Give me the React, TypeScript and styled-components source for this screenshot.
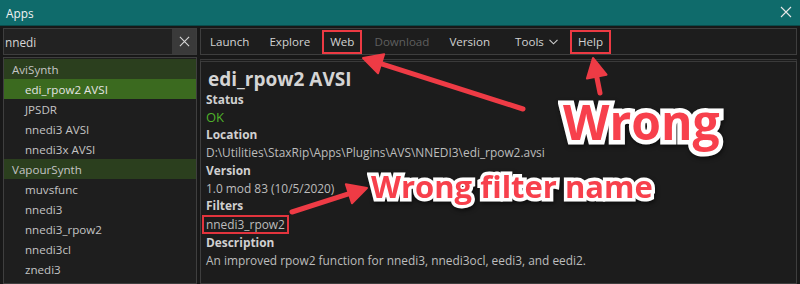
import React from "react";
import styled, { createGlobalStyle } from "styled-components";

const Global = createGlobalStyle`
  html, body { margin: 0; padding: 0; background: #181818; }
  body { font-family: "Open Sans", "Noto Sans", sans-serif; }
  * { box-sizing: border-box; }
`;

const Window = styled.div`
  position: relative;
  width: 800px;
  height: 284px;
  overflow: hidden;
  background: #181818;
  display: flex;
  flex-direction: column;
`;

const TitleBar = styled.div`
  height: 26px;
  flex: none;
  background: #0f6b6b;
  border-bottom: 1px solid #0a4c4c;
  display: flex;
  align-items: center;
  justify-content: space-between;
  padding: 0 8px 0 6px;
  color: #f2f2f2;
  font-size: 11.8px;
`;

const CloseBtn = styled.span`
  display: flex;
  width: 12px;
  height: 12px;
  margin-top: -2px;
`;

const Body = styled.div`
  flex: 1;
  display: grid;
  grid-template-columns: 194px 1fr;
  column-gap: 3px;
  padding: 2px 3px 0 3px;
  min-height: 0;
`;

const Column = styled.div<{ $gap: number }>`
  display: flex;
  flex-direction: column;
  gap: ${(p) => p.$gap}px;
  min-height: 0;
`;

const SearchBox = styled.div`
  height: 27px;
  flex: none;
  display: flex;
  border: 1px solid #3e3e3e;
  background: #222222;
`;

const SearchText = styled.div`
  flex: 1;
  display: flex;
  align-items: center;
  padding-left: 1px;
  color: #d6d6d6;
  font-size: 11.8px;
`;

const ClearBtn = styled.div`
  width: 24px;
  display: flex;
  align-items: center;
  justify-content: center;
  background: #3a3a3a;
`;

const ListPanel = styled.div`
  flex: 1;
  border: 1px solid #3f3f3f;
  background: #1e1e1e;
  padding-top: 1px;
  overflow: hidden;
`;

const ListRow = styled.div<{ $kind: "group" | "item" | "selected" }>`
  height: 20px;
  display: flex;
  align-items: center;
  padding-left: ${(p) => (p.$kind === "group" ? 8 : 21)}px;
  font-size: 11.6px;
  color: ${(p) => (p.$kind === "selected" ? "#e4e4e4" : "#c4c4c4")};
  background: ${(p) =>
    p.$kind === "group" ? "#2b3f1e" : p.$kind === "selected" ? "#3b6a1f" : "transparent"};
`;

const Toolbar = styled.div`
  height: 27px;
  flex: none;
  display: flex;
  align-items: center;
  gap: 4px;
  padding: 0 1px;
  border: 1px solid #3e3e3e;
  background: #1d1d1d;
`;

const ToolButton = styled.div<{ $disabled?: boolean; $marked?: boolean; $spaced?: boolean }>`
  height: 24px;
  display: flex;
  align-items: center;
  gap: 5px;
  padding: 0 6px;
  margin-left: ${(p) => (p.$spaced ? 5 : 0)}px;
  font-size: 11.6px;
  color: ${(p) => (p.$disabled ? "#5f5f5f" : "#d2d2d2")};
  border: 2px solid ${(p) => (p.$marked ? "#ec3a43" : "transparent")};
`;

const Details = styled.div`
  flex: 1;
  margin-top: 1px;
  border: 1px solid #3e3e3e;
  border-top: 3px double #3a3a3a;
  background: #1c1c1c;
  padding: 5px 5px 0 5px;
  overflow: hidden;
`;

const Title = styled.div`
  font-size: 19px;
  font-weight: 700;
  color: #d4d4d4;
  line-height: 24px;
  padding-left: 2px;
`;

const Label = styled.div`
  font-size: 11.9px;
  font-weight: 700;
  color: #d0d0d0;
  line-height: 17.7px;
`;

const Value = styled.div<{ $tone?: "ok" }>`
  font-size: ${(p) => (p.$tone === "ok" ? 13 : 11.9)}px;
  color: ${(p) => (p.$tone === "ok" ? "#4fb12a" : "#bdbdbd")};
  line-height: 17.7px;
`;

const Marked = styled.span`
  display: inline-block;
  margin-left: -4px;
  padding: 0 2px;
  line-height: 15px;
  border: 2px solid #e2343d;
`;

const Overlay = styled.svg`
  position: absolute;
  left: 0;
  top: 0;
  pointer-events: none;
`;

const Callout = styled.div<{ $size: number; $x: number; $y: number }>`
  position: absolute;
  left: ${(p) => p.$x}px;
  top: ${(p) => p.$y}px;
  font-family: "Open Sans", "Noto Sans", sans-serif;
  font-weight: 700;
  font-size: ${(p) => p.$size}px;
  line-height: 1;
  white-space: nowrap;
  color: #f7404c;
  -webkit-text-stroke: ${(p) => (p.$size > 40 ? 9 : 7)}px #ffffff;
  paint-order: stroke fill;
  filter: drop-shadow(1px 2px 2px rgba(0, 0, 0, 0.55));
`;

type Pt = [number, number];

function Arrow({ tail, tip }: { tail: Pt; tip: Pt }) {
  const dx = tail[0] - tip[0];
  const dy = tail[1] - tip[1];
  const len = Math.hypot(dx, dy);
  const ux = dx / len;
  const uy = dy / len;
  const headLen = 19;
  const half = 10;
  const bx = tip[0] + ux * headLen;
  const by = tip[1] + uy * headLen;
  const w1: Pt = [bx - uy * half, by + ux * half];
  const w2: Pt = [bx + uy * half, by - ux * half];
  return (
    <g>
      <line
        x1={tail[0]}
        y1={tail[1]}
        x2={bx - ux * 2}
        y2={by - uy * 2}
        stroke="#ee3b45"
        strokeWidth={5}
        strokeLinecap="round"
      />
      <polygon
        points={`${tip[0]},${tip[1]} ${w1[0]},${w1[1]} ${w2[0]},${w2[1]}`}
        fill="#ee3b45"
        stroke="#ee3b45"
        strokeWidth={2}
        strokeLinejoin="round"
      />
    </g>
  );
}

const XIcon = ({ size, color, weight }: { size: number; color: string; weight: number }) => (
  <svg width={size} height={size} viewBox="0 0 12 12">
    <path d="M1 1 L11 11 M11 1 L1 11" stroke={color} strokeWidth={weight} fill="none" />
  </svg>
);

const ChevronIcon = () => (
  <svg width="9" height="6" viewBox="0 0 9 6">
    <path d="M0.5 0.8 L4.5 4.8 L8.5 0.8" stroke="#cfcfcf" strokeWidth="1.1" fill="none" />
  </svg>
);

const rows: { label: string; kind: "group" | "item" | "selected" }[] = [
  { label: "AviSynth", kind: "group" },
  { label: "edi_rpow2 AVSI", kind: "selected" },
  { label: "JPSDR", kind: "item" },
  { label: "nnedi3 AVSI", kind: "item" },
  { label: "nnedi3x AVSI", kind: "item" },
  { label: "VapourSynth", kind: "group" },
  { label: "muvsfunc", kind: "item" },
  { label: "nnedi3", kind: "item" },
  { label: "nnedi3_rpow2", kind: "item" },
  { label: "nnedi3cl", kind: "item" },
  { label: "znedi3", kind: "item" },
];

export default function App() {
  return (
    <>
      <Global />
      <Window>
        <TitleBar>
          <span>Apps</span>
          <CloseBtn>
            <XIcon size={12} color="#e8e8e8" weight={1.1} />
          </CloseBtn>
        </TitleBar>
        <Body>
          <Column $gap={2}>
            <SearchBox>
              <SearchText>nnedi</SearchText>
              <ClearBtn>
                <XIcon size={11} color="#d8d8d8" weight={1.2} />
              </ClearBtn>
            </SearchBox>
            <ListPanel>
              {rows.map((r) => (
                <ListRow key={r.label} $kind={r.kind}>
                  {r.label}
                </ListRow>
              ))}
            </ListPanel>
          </Column>
          <Column $gap={3}>
            <Toolbar>
              <ToolButton>Launch</ToolButton>
              <ToolButton>Explore</ToolButton>
              <ToolButton $marked>Web</ToolButton>
              <ToolButton $disabled>Download</ToolButton>
              <ToolButton>Version</ToolButton>
              <ToolButton $spaced>
                Tools <ChevronIcon />
              </ToolButton>
              <ToolButton $marked>Help</ToolButton>
            </Toolbar>
            <Details>
              <Title>edi_rpow2 AVSI</Title>
              <Label>Status</Label>
              <Value $tone="ok">OK</Value>
              <Label>Location</Label>
              <Value>D:\Utilities\StaxRip\Apps\Plugins\AVS\NNEDI3\edi_rpow2.avsi</Value>
              <Label>Version</Label>
              <Value>1.0 mod 83 (10/5/2020)</Value>
              <Label>Filters</Label>
              <Value>
                <Marked>nnedi3_rpow2</Marked>
              </Value>
              <Label>Description</Label>
              <Value>An improved rpow2 function for nnedi3, nnedi3ocl, eedi3, and eedi2.</Value>
            </Details>
          </Column>
        </Body>
        <Overlay width={800} height={284} viewBox="0 0 800 284">
          <Arrow tail={[523, 109]} tip={[363, 58]} />
          <Arrow tail={[600, 93]} tip={[593, 58]} />
          <Arrow tail={[292, 212]} tip={[367, 188]} />
        </Overlay>
        <Callout $size={48} $x={563} $y={98}>
          Wrong
        </Callout>
        <Callout $size={31} $x={371} $y={171}>
          Wrong filter name
        </Callout>
      </Window>
    </>
  );
}
